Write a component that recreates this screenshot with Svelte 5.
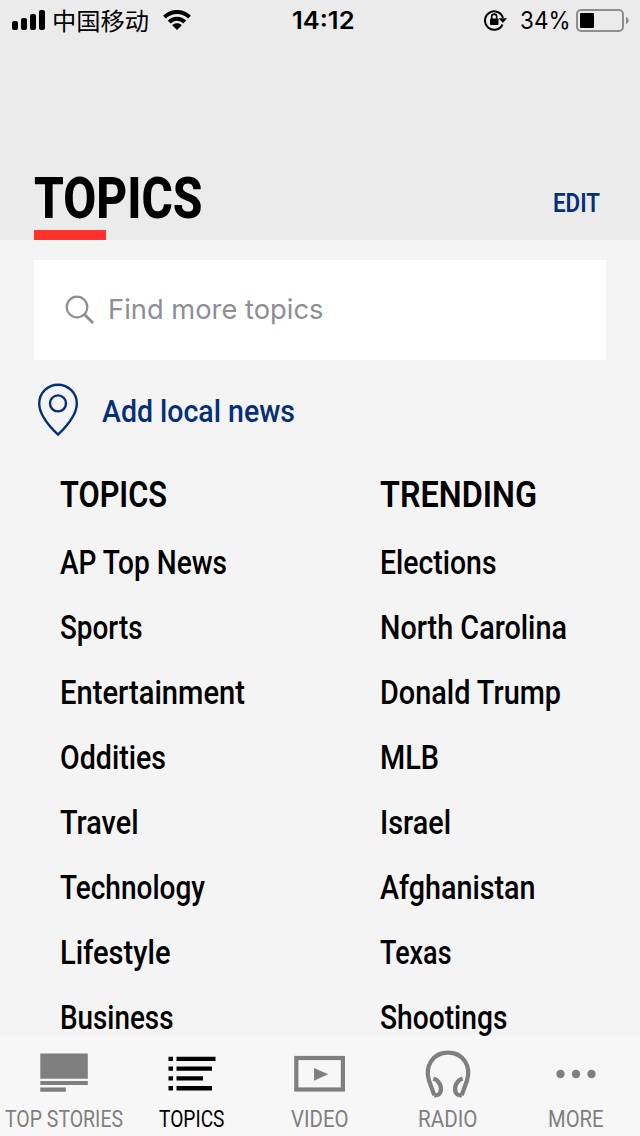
<script>
  const topics = [
    ['AP Top News', 167], ['Sports', 82.5], ['Entertainment', 185], ['Oddities', 106],
    ['Travel', 78.5], ['Technology', 145], ['Lifestyle', 110.5], ['Business', 113.5]
  ];
  const trending = [
    ['Elections', 116.5], ['North Carolina', 187], ['Donald Trump', 181], ['MLB', 59],
    ['Israel', 71], ['Afghanistan', 155.5], ['Texas', 71.5], ['Shootings', 127.5]
  ];
  const tabs = [
    ['TOP STORIES', 118], ['TOPICS', 65.5], ['VIDEO', 57.5], ['RADIO', 59.5], ['MORE', 55.5]
  ];
</script>

{#snippet label(text, width, height, baseline)}
  <svg class="label" {width} {height}>
    <text x="0" y={baseline} textLength={width} lengthAdjust="spacingAndGlyphs">{text}</text>
  </svg>
{/snippet}

{#snippet column(title, width, items)}
  <section class="column">
    <h2>{@render label(title, width, 60, 37)}</h2>
    <ul>
      {#each items as [name, w]}
        <li>{@render label(name, w, 65, 44.4)}</li>
      {/each}
    </ul>
  </section>
{/snippet}

<div class="screen">
  <header>
    <div class="status">
      <div class="carrier">
        <svg width="34" height="22" viewBox="0 0 34 22">
          <rect x="0" y="12" width="6" height="9" rx="2" />
          <rect x="9" y="9" width="6" height="12" rx="2" />
          <rect x="18" y="5" width="6" height="16" rx="2" />
          <rect x="27" y="1" width="6" height="20" rx="2" />
        </svg>
        <span class="cjk">{@render label('中国移动', 97, 40, 29.5)}</span>
        <svg class="wifi" width="28" height="20" viewBox="0 0 28 20">
          <path d="M1.5 7.2C8.5.2 19.5.2 26.5 7.2" />
          <path d="M6.2 12C10.6 7.6 17.4 7.6 21.8 12" />
          <path class="dot" d="M9.2 15.2C12 12.6 16 12.6 18.8 15.2L14 20Z" />
        </svg>
      </div>
      <div class="time">{@render label('14:12', 62.5, 40, 29)}</div>
      <div class="power">
        <svg width="23" height="22" viewBox="0 0 23 22">
          <path class="ring" d="M18.5 15.5A9.200 9.200 0 1 1 19 9" />
          <path d="M14.600 9.300H23L18.800 14Z" />
          <rect x="6" y="9.500" width="8.500" height="6.500" rx="1" />
          <path class="ring thin" d="M7.700 10V7.600a2.500 2.500 0 0 1 5 0V10" />
        </svg>
        <span class="pct">{@render label('34%', 50.5, 40, 29)}</span>
        <svg class="battery" width="54" height="24" viewBox="0 0 54 24">
          <rect class="case" x="1" y="1" width="46" height="21" rx="4" />
          <rect x="4" y="4" width="14" height="15" rx="1" />
          <path class="tip" d="M50 8c3.5 1 3.5 6 0 7Z" />
        </svg>
      </div>
    </div>
    <div class="heading">
      <h1>{@render label('TOPICS', 168.5, 60, 48)}</h1>
      <button class="edit">{@render label('EDIT', 47, 30, 22)}</button>
    </div>
    <div class="accent"></div>
  </header>

  <main>
    <div class="search">
      <svg width="30" height="30" viewBox="0 0 30 30">
        <circle cx="12" cy="12" r="10.3" />
        <path d="M19.5 19.5L28 28" />
      </svg>
      {@render label('Find more topics', 215.5, 50, 34)}
    </div>
    <button class="local">
      <svg width="42" height="54" viewBox="0 0 42 54">
        <path d="M21 51.700C14 45 2.200 33 2.200 20.500A18.800 18.800 0 0 1 39.800 20.500C39.800 33 28 45 21 51.700Z" />
        <circle cx="21" cy="20.400" r="8" />
      </svg>
      {@render label('Add local news', 193, 54, 39)}
    </button>
    <div class="columns">
      {@render column('TOPICS', 107, topics)}
      {@render column('TRENDING', 157, trending)}
    </div>
  </main>

  <nav>
    {#each tabs as [name, w], i}
      <button class="tab" class:active={i === 1}>
        <svg class="icon" width="60" height="54" viewBox="0 0 60 54">
          {#if i === 0}
            <path d="M6.300 7.500h47.500v25.300h-47.500zM6.300 35h47.500v4h-47.500zM6.300 41.500h25.500v4.300h-25.500z" />
          {:else if i === 1}
            <path d="M6.500 10.700h4.500v4.300h-4.500zM14.500 10.700h39v4.300h-39zM6.500 20.500h4.500v4.300h-4.500zM14.500 20.500h35.500v4.300h-35.500zM6.500 30.300h4.500v4.300h-4.500zM14.500 30.300h26.500v4.300h-26.500zM6.500 40.100h4.500v4.300h-4.500zM14.500 40.100h35.500v4.300h-35.500z" />
          {:else if i === 2}
            <rect class="stroke" x="6.300" y="12" width="46.600" height="31.500" />
            <path d="M24 22L38.200 28.300L24 34.800z" />
          {:else if i === 3}
            <path class="stroke" d="M16.300 49.300L11 34.500C6.500 20 15 6.700 30 6.700S53.500 20 49 34.500L43.700 49.300M15.300 32.500C21 34 24.500 41 22.300 46.500C21 49.500 18.500 49.500 16.300 49.300M44.700 32.500C39 34 35.500 41 37.700 46.500C39 49.500 41.500 49.500 43.700 49.300" />
          {:else}
            <circle cx="14.500" cy="28" r="4.200" /><circle cx="30" cy="28" r="4.200" /><circle cx="45.500" cy="28" r="4.200" />
          {/if}
        </svg>
        {@render label(name, w, 46, 37)}
      </button>
    {/each}
  </nav>
</div>

<style>
  :global(body) { margin: 0; overflow: hidden; }
  .screen {
    width: 640px; height: 1136px; display: flex; flex-direction: column;
    overflow: hidden; background: #f4f4f4; font-family: Roboto, sans-serif; color: #000;
  }
  svg { display: block; flex: none; fill: currentColor; }
  .label { overflow: visible; }
  button { border: 0; padding: 0; background: none; font-family: inherit; }
  h1, h2, ul { margin: 0; padding: 0; list-style: none; }

  header { height: 240px; flex: none; background: #ebebeb; }
  .status {
    height: 40px; display: grid; grid-template-columns: 292px 1fr auto;
    padding-right: 10px; font-family: Inter, sans-serif;
  }
  .carrier, .power { display: flex; align-items: center; }
  .carrier { padding-left: 12px; }
  .cjk { margin-left: 6px; font: 24px "Noto Sans CJK SC", sans-serif; }
  .wifi { margin-left: 14px; }
  .wifi path { fill: none; stroke: #000; stroke-width: 4; }
  .wifi .dot { fill: #000; stroke: none; }
  .time { font-size: 24px; font-weight: 600; }
  .ring { fill: none; stroke: #000; stroke-width: 2; }
  .thin { stroke-width: 1.6; }
  .pct { margin: 0 6px 0 13px; font-size: 24px; }
  .battery { margin-top: 2px; }
  .case { fill: none; stroke: #8e8e8e; stroke-width: 2; }
  .tip { fill: #8e8e8e; }
  .heading { display: flex; justify-content: space-between; align-items: center; height: 60px; padding: 130px 40px 0 34px; }
  h1 { font-size: 57.500px; font-weight: 800; }
  .edit { padding-top: 10px; font-size: 25px; font-weight: 600; color: #062f79; }
  .accent { width: 72px; height: 10px; margin-left: 34px; background: #ff322e; }

  main { flex: 1; min-height: 0; overflow: hidden; padding-top: 20px; }
  .search {
    display: flex; align-items: center; gap: 13px; height: 100px; margin: 0 34px;
    padding-left: 31px; box-sizing: border-box; background: #fff; color: #8e8e93;
    font: 27.500px Inter, sans-serif;
  }
  .search circle, .search path { fill: none; stroke: #8e8e93; stroke-width: 2.200; }
  .search path { stroke-width: 3; }
  .local { display: flex; gap: 23px; margin: 23px 0 0 37px; color: #062f79; font-size: 32px; font-weight: 550; }
  .local path, .local circle { fill: none; stroke: currentColor; stroke-width: 2.400; }
  .columns { display: grid; grid-template-columns: 320px 1fr; padding: 33px 0 0 60px; }
  h2 { font-size: 36px; font-weight: 600; }
  ul { font-size: 32.500px; font-weight: 550; }

  nav { height: 100px; flex: none; display: grid; grid-template-columns: repeat(5, 1fr); background: #f7f7f7; }
  .tab { display: flex; flex-direction: column; align-items: center; padding-top: 8px; color: #7f7f7f; font-size: 23px; }
  .active { color: #000; }
  .icon { margin-top: 2px; margin-bottom: -10px; }
  .stroke { fill: none; stroke: currentColor; stroke-width: 4.200; }
</style>
